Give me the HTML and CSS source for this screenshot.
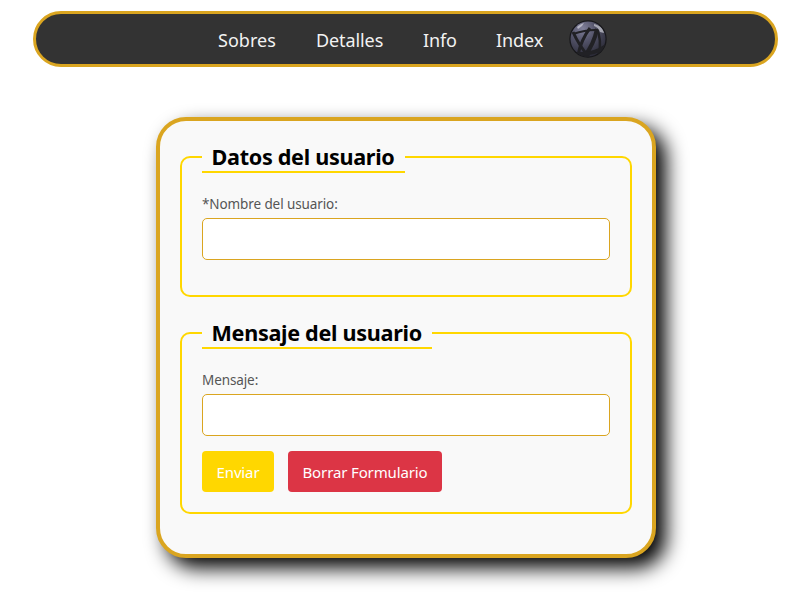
FILE: index.html
```
<!DOCTYPE html>
<html lang="es">
<head>
<meta charset="UTF-8">
<title>Formulario</title>
<link rel="stylesheet" href="styles.css">
</head>
<body>
<nav class="navbar">
  <a class="sobres" href="#">Sobres</a>
  <a class="detalles" href="#">Detalles</a>
  <a class="info" href="#">Info</a>
  <a class="index" href="#">Index</a>
  <svg class="ball" viewBox="0 0 38 38" aria-hidden="true">
    <defs>
      <radialGradient id="shade" cx=".35" cy=".2" r=".85">
        <stop offset="0" stop-color="#80809a"/>
        <stop offset=".4" stop-color="#56566c"/>
        <stop offset="1" stop-color="#292935"/>
      </radialGradient>
      <clipPath id="round"><circle cx="19" cy="19" r="18"/></clipPath>
    </defs>
    <circle cx="19" cy="19" r="18.7" fill="#17171a"/>
    <g clip-path="url(#round)">
      <circle cx="19" cy="19" r="17.5" fill="url(#shade)"/>
      <path d="M8 7C10 5 12 4 15 3L13 6L9 9Z" fill="#b5b5c4"/>
      <g fill="none" stroke="#212125" stroke-width="3">
        <path d="M4 14C10 12 18 10 26 10" stroke-width="2"/>
        <path d="M4 12C8 21 13 29 20 37"/>
        <path d="M21 8C15 16 11 25 9 35"/>
        <path d="M28 9C26 19 22 28 15 37" stroke-width="4"/>
        <path d="M28 9C31 16 32 24 30 34" stroke-width="2.5"/>
        <path d="M10 34C20 34 29 32 37 26" stroke-width="4"/>
      </g>
      <path d="M25 4C30 5 34 8 35 13L31 12C30 9 28 7 25 6Z" fill="#a5a6b1"/>
    </g>
  </svg>
</nav>
<form class="card">
  <fieldset class="user">
    <legend>Datos del usuario</legend>
    <label for="nombre">*Nombre del usuario:</label>
    <input id="nombre" type="text">
  </fieldset>
  <fieldset class="message">
    <legend>Mensaje del usuario</legend>
    <label for="mensaje">Mensaje:</label>
    <input id="mensaje" type="text">
    <div class="actions">
      <button class="send" type="button">Enviar</button>
      <button class="clear" type="button">Borrar Formulario</button>
    </div>
  </fieldset>
</form>
</body>
</html>
```
FILE: styles.css
```
* { box-sizing: border-box; }
body {
  margin: 0;
  min-height: 593px;
  padding-top: 11px;
  background: #fff;
  font-family: "Noto Sans", "Open Sans", sans-serif;
}
.navbar {
  display: flex;
  align-items: center;
  width: 745px;
  height: 56px;
  margin-left: 33px;
  padding-left: 182px;
  background: #333;
  border: 3px solid goldenrod;
  border-radius: 30px;
}
.navbar a {
  margin-right: 40px;
  padding-top: 2px;
  color: #f2f2f2;
  font-size: 18px;
  line-height: 24px;
  text-decoration: none;
  white-space: nowrap;
  letter-spacing: -0.1px;
}
.navbar .sobres { width: 58px; letter-spacing: 0.05px; }
.navbar .detalles { width: 67px; }
.navbar .info { width: 33px; }
.navbar .index { width: 47px; margin-right: 26px; }
.ball { width: 38px; height: 38px; }
.card {
  width: 500px;
  height: 441px;
  margin: 50px 0 0 156px;
  padding: 20px;
  background: #f9f9f9;
  border: 4px solid goldenrod;
  border-radius: 30px;
  box-shadow: 10px 10px 20px #000;
}
fieldset {
  margin: 0 0 20px;
  padding: 20px;
  border: 2px solid gold;
  border-radius: 10px;
}
.user { height: 156px; }
.message { height: 197px; }
legend {
  height: 32px;
  padding: 0 9.5px;
  border-bottom: 2px solid gold;
  color: #000;
  font-size: 21.6px;
  font-weight: 700;
  line-height: 32px;
  white-space: nowrap;
  letter-spacing: -0.3px;
}
.user legend { width: 203px; }
.message legend { width: 230px; }
label {
  display: block;
  height: 20px;
  margin-bottom: 5px;
  color: #555;
  font-size: 13.5px;
  line-height: 22px;
  letter-spacing: -0.1px;
}
input {
  display: block;
  width: 100%;
  height: 42px;
  padding: 10px;
  background: #fff;
  border: 1px solid goldenrod;
  border-radius: 5px;
}
.actions { display: flex; gap: 14px; margin-top: 15px; }
button {
  height: 41px;
  padding: 0;
  border: 0;
  border-radius: 4px;
  color: #fff;
  font: 15px "Noto Sans", "Open Sans", sans-serif;
  white-space: nowrap;
  letter-spacing: -0.13px;
}
.send { width: 72px; background: gold; }
.clear { width: 154px; background: #dc3545; }
```
